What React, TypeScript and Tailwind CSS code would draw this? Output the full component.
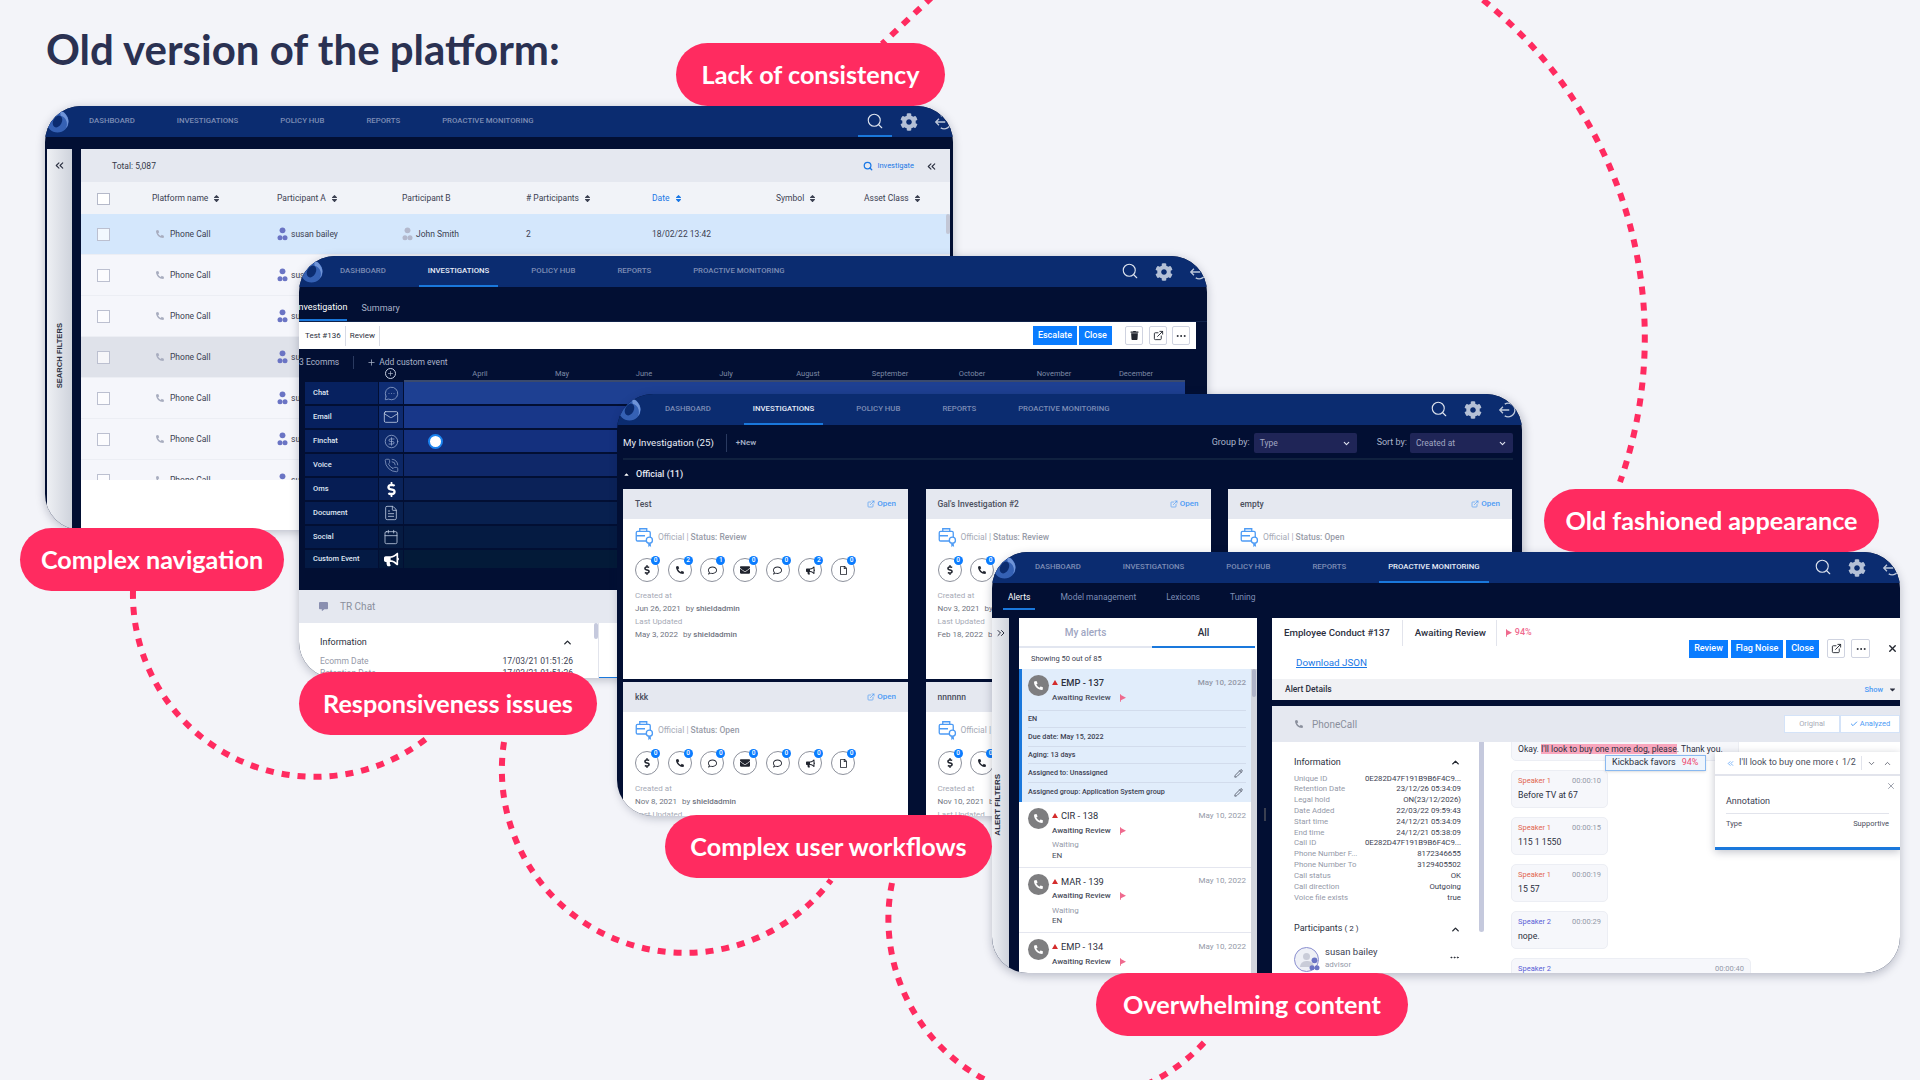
import React from 'react';
import { Search, ChevronsLeft, ChevronsRight, ChevronUp, ChevronDown, ExternalLink, MoreHorizontal, Pencil, X, FileText, MessageCircleMore, CircleDollarSign, Mail, PhoneCall, Calendar, Plus, Check } from 'lucide-react';
import { FaCog, FaPhoneAlt, FaSort, FaTrash, FaEnvelope, FaBullhorn, FaDollarSign, FaCommentAlt, FaRegFile, FaRegComment, FaCaretDown, FaCaretUp } from 'react-icons/fa';

const NAV = ['DASHBOARD', 'INVESTIGATIONS', 'POLICY HUB', 'REPORTS', 'PROACTIVE MONITORING'];

function Logo() {
  return (
    <svg viewBox="0 0 24 24" className="h-full w-full">
      <circle cx="12" cy="12" r="11.5" fill="#3561b4" />
      <path d="M12 .5A11.5 11.5 0 0 1 20 20 A9 9 0 0 0 15.500 6 A7 7 0 0 0 12 .5Z" fill="#6f94d8" />
      <ellipse cx="12" cy="12" rx="4.500" ry="6.500" transform="rotate(28 12 12)" fill="#0b2c70" />
    </svg>
  );
}

function ExitIcon() {
  return (
    <svg viewBox="0 0 20 20" className="h-[18px] w-[18px]" fill="none" stroke="#bcc7da" strokeWidth="1.500">
      <path d="M7.500 3.500A7.500 7.500 0 1 1 7.500 16.500" />
      <path d="M12.500 10H2M5.500 6.500 2 10l3.500 3.500" />
    </svg>
  );
}

function Header({ active, pl, shift, searchLine }: { active: number; pl: string; shift: string; searchLine?: boolean }) {
  return (
    <div className={`relative flex h-[31px] shrink-0 items-stretch bg-[#0b2c70] ${pl}`}>
      <div className="absolute left-[1px] top-[3px] h-[25px] w-[23px]">
        <Logo />
      </div>
      <div className="flex gap-[24px]">
        {NAV.map((n, i) => (
          <div
            key={n}
            className={`flex items-center border-b-2 px-[9px] text-[7.800px] font-medium whitespace-nowrap ${i === active ? 'border-[#1a78dc] text-[#e8edf7]' : 'border-transparent text-[#7d8db5]'}`}
          >
            {n}
          </div>
        ))}
      </div>
      <div className={`ml-auto flex items-center ${shift}`}>
        <div className={`flex h-full w-[34px] items-center justify-center border-b-2 ${searchLine ? 'border-[#1a78dc]' : 'border-transparent'}`}>
          <Search size={18} strokeWidth={1.500} className="text-[#dde3ee]" />
        </div>
        <div className="flex w-[34px] justify-center">
          <FaCog size={18} className="text-[#b4c0d6]" />
        </div>
        <div className="flex w-[34px] justify-center">
          <ExitIcon />
        </div>
      </div>
    </div>
  );
}

function UserIcon({ color = '#6a74c4' }: { color?: string }) {
  return (
    <svg viewBox="0 0 12 18" className="h-[15px] w-[11px] shrink-0">
      <circle cx="6" cy="4" r="3.500" fill={color} />
      <circle cx="3" cy="13" r="3" fill={color} />
      <circle cx="9" cy="13" r="3" fill={color} />
    </svg>
  );
}

function Window1() {
  const rows = ['bg-[#d4e7fc]', 'bg-[#f5f6fb]', 'bg-[#f5f6fb]', 'bg-[#dfe2ea]', 'bg-[#f5f6fb]', 'bg-[#f5f6fb]', 'bg-[#f5f6fb]'];
  const cols = 'grid grid-cols-[71px_125px_125px_124px_126px_124px_88px_1fr] items-center';
  const Head = ({ t, blue, noSort }: { t: string; blue?: boolean; noSort?: boolean }) => (
    <div className={`flex items-center gap-[4px] text-[8.500px] ${blue ? 'text-[#1a78e6]' : 'text-[#3c4152]'}`}>
      {t}
      {!noSort && <FaSort size={9} />}
    </div>
  );
  return (
    <div className="absolute left-[45px] top-[106px] flex h-[424px] w-[908px] flex-col overflow-hidden rounded-[36px] bg-[#020f33] shadow-[0_2px_10px_rgba(10,20,50,0.25)]">
      <Header active={-1} pl="pl-[35px]" shift="-mr-[7px]" searchLine />
      <div className="mt-[12px] flex min-h-0 flex-1 pl-[2px] pr-[3px]">
        <div className="flex w-[25px] shrink-0 flex-col items-center bg-gradient-to-r from-[#eef0f4] to-[#cfd3dc]">
          <ChevronsLeft size={13} className="mt-[10px] text-[#2a2f40]" />
          <div className="mt-[151px] rotate-180 font-['Liberation_Sans',sans-serif] text-[7.600px] font-bold text-[#2a2f40] [writing-mode:vertical-rl]">SEARCH FILTERS</div>
        </div>
        <div className="ml-[9px] flex min-w-0 flex-1 flex-col bg-white">
          <div className="flex h-[33px] shrink-0 items-center bg-[#e5e8f0] pl-[31px] pt-[1px] text-[8.500px] text-[#343848]">
            Total: 5,087
            <div className="ml-auto flex items-center pr-[12px]">
              <Search size={10} strokeWidth={3} className="text-[#1a78e6]" />
              <span className="ml-[4px] text-[7.500px] text-[#1a78e6]">Investigate</span>
              <ChevronsLeft size={13} className="ml-[11px] text-[#2a2f40]" />
            </div>
          </div>
          <div className={`${cols} h-[32px] shrink-0 bg-[#f1f3f8] pt-[1px]`}>
            <div className="ml-[16px] h-[12px] w-[13px] border border-[#b5b9c9] bg-white" />
            <Head t="Platform name" />
            <Head t="Participant A" />
            <Head t="Participant B" noSort />
            <Head t="# Participants" />
            <Head t="Date" blue />
            <Head t="Symbol" />
            <Head t="Asset Class" />
          </div>
          <div className="relative h-[266px] shrink-0 overflow-hidden">
            <div className="absolute right-0 top-[0px] h-[20px] w-[4px] rounded-full bg-[#c3c7d6]" />
            {rows.map((bg, i) => (
              <div key={i} className={`${cols} h-[41px] border-b border-[#eceef4] text-[8.500px] text-[#3c4152] ${bg}`}>
                <div className="ml-[16px] h-[13px] w-[13px] border border-[#bcc0d0] bg-white/70" />
                <div className="ml-[4px] flex items-center gap-[6px]">
                  <FaPhoneAlt size={8} className="text-[#a8adbf]" />
                  Phone Call
                </div>
                <div className="flex items-center gap-[3px]">
                  <UserIcon />
                  susan bailey
                </div>
                <div className="flex items-center gap-[3px]">
                  <UserIcon color="#b3b8cc" />
                  John Smith
                </div>
                <div>2</div>
                <div>18/02/22 13:42</div>
              </div>
            ))}
          </div>
        </div>
      </div>
    </div>
  );
}

const TIMELINE = [
  { t: 'Chat', lab: 'bg-[#07215f]', ic: 'bg-[#0f2d74]', bar: 'bg-[#1e4092]', el: <MessageCircleMore size={15} strokeWidth={1.200} className="text-[#9fb0d4]" /> },
  { t: 'Email', lab: 'bg-[#07205e]', ic: 'bg-[#0e2b70]', bar: 'bg-[#183789]', el: <Mail size={16} strokeWidth={1.200} className="text-[#c4cfe4]" /> },
  { t: 'Finchat', lab: 'bg-[#071f5b]', ic: 'bg-[#0d296b]', bar: 'bg-[#14307e]', el: <CircleDollarSign size={15} strokeWidth={1.200} className="text-[#9fb0d4]" /> },
  { t: 'Voice', lab: 'bg-[#061e58]', ic: 'bg-[#0c2766]', bar: 'bg-[#0f2869]', el: <PhoneCall size={15} strokeWidth={1.100} className="text-[#9fb0d4]" /> },
  { t: 'Oms', lab: 'bg-[#061d54]', ic: 'bg-[#0a235a]', bar: 'bg-[#0b2258]', el: <FaDollarSign size={15} className="text-white" /> },
  { t: 'Document', lab: 'bg-[#051c50]', ic: 'bg-[#08204f]', bar: 'bg-[#08204f]', el: <FileText size={16} strokeWidth={1.200} className="text-[#c4cfe4]" /> },
  { t: 'Social', lab: 'bg-[#041a4a]', ic: 'bg-[#061b42]', bar: 'bg-[#051b42]', el: <Calendar size={16} strokeWidth={1.200} className="text-[#c4cfe4]" /> },
  { t: 'Custom Event', lab: 'bg-[#041a44]', ic: 'bg-[#03183a]', bar: 'bg-[#031a38]', el: <FaBullhorn size={15} className="text-white" /> },
];
const MONTHS = ['April', 'May', 'June', 'July', 'August', 'September', 'October', 'November', 'December'];

function Window2() {
  return (
    <div className="absolute left-[299px] top-[256px] flex h-[422px] w-[908px] flex-col overflow-hidden rounded-[36px] bg-[#020f33] shadow-[0_2px_10px_rgba(10,20,50,0.25)]">
      <Header active={1} pl="pl-[32px]" shift="-mr-[8px]" />
      <div className="flex h-[35px] shrink-0 items-end gap-[14px] border-b border-[#10224a] text-[9px] text-[#aab4ca]">
        <div className="-ml-[3px] flex h-[25px] items-center border-b-2 border-[#1a78dc] text-white">Investigation</div>
        <div className="flex h-[25px] items-center">Summary</div>
      </div>
      <div className="flex h-[27px] w-[897px] shrink-0 items-center bg-white pl-[6px] text-[8px] text-[#2c3040]">
        <span className="border-r border-[#d8dbe5] pr-[4px] leading-[20px]">Test #136</span>
        <span className="border-r border-[#d8dbe5] px-[4px] leading-[20px]">Review</span>
        <div className="ml-auto flex items-center pr-[6px]">
          <span className="flex h-[19px] w-[44px] items-center justify-center bg-[#0a7cff] text-[9px] font-medium text-white">Escalate</span>
          <span className="ml-[2px] flex h-[19px] w-[33px] items-center justify-center bg-[#0a7cff] text-[9px] font-medium text-white">Close</span>
          <span className="ml-[13px] flex h-[19px] w-[18px] items-center justify-center rounded-[2px] border border-[#cfd3e0]"><FaTrash size={9} className="text-[#22262f]" /></span>
          <span className="ml-[6px] flex h-[19px] w-[18px] items-center justify-center rounded-[2px] border border-[#cfd3e0]"><ExternalLink size={11} className="text-[#22262f]" /></span>
          <span className="ml-[5px] flex h-[19px] w-[18px] items-center justify-center rounded-[2px] border border-[#cfd3e0]"><MoreHorizontal size={12} className="text-[#22262f]" /></span>
        </div>
      </div>
      <div className="flex h-[241px] shrink-0 flex-col pl-[6px]">
        <div className="flex h-[26px] shrink-0 items-center pt-[1px] text-[8.500px] text-[#aab4ca]">
          <span className="-ml-[6px] border-r border-[#2a3a60] pr-[14px]">3 Ecomms</span>
          <Plus size={9} className="ml-[13px] text-[#aab4ca]" />
          <span className="ml-[3px]">Add custom event</span>
        </div>
        <div className="relative flex h-[7px] shrink-0 items-end">
          <div className="absolute left-[80px] -top-[7px] flex h-[11px] w-[11px] items-center justify-center rounded-full border border-[#c8d0e2]"><Plus size={7} className="text-[#c8d0e2]" /></div>
          <div className="ml-[99px] flex h-[2px] w-[781px] bg-[#3a4a6d]" />
          <div className="absolute left-[99px] -top-[7px] flex w-[781px] pl-[35px]">
            {MONTHS.map((m) => (
              <div key={m} className="w-[82px] shrink-0 text-center text-[7.500px] text-[#7e8aa6]">{m}</div>
            ))}
          </div>
        </div>
        <div className="flex w-[880px] flex-col gap-[2px]">
          {TIMELINE.map((r) => (
            <div key={r.t} className={`relative grid grid-cols-[73px_24px_781px] gap-x-[1px] ${r.t === 'Custom Event' ? 'h-[18px] overflow-hidden' : 'h-[22px]'}`}>
              <div className={`flex items-center pl-[8px] text-[7.500px] font-medium text-[#dfe5f2] ${r.lab}`}>{r.t}</div>
              <div className={`flex items-center justify-center ${r.ic}`}>{r.el}</div>
              <div className={`relative ${r.bar}`}>
                {r.t === 'Finchat' && <div className="absolute left-[24px] top-[4px] h-[15px] w-[15px] rounded-full border-2 border-[#1a82ee] bg-white" />}
              </div>
            </div>
          ))}
        </div>
      </div>
      <div className="flex h-[33px] shrink-0 items-center bg-[#e5e8f0] pl-[20px] text-[10px] text-[#8a8f9c]">
        <FaCommentAlt size={9} className="text-[#8a8fb0]" />
        <span className="ml-[12px]">TR Chat</span>
      </div>
      <div className="relative flex flex-1 bg-white">
        <div className="flex w-[300px] shrink-0 flex-col border-r border-[#e2e4ec] pl-[21px] pr-[25px] pt-[13px] text-[8.500px]">
          <div className="flex items-center justify-between text-[9px] text-[#2c3040]">Information<ChevronUp size={11} strokeWidth={3} className="text-[#22262f]" /></div>
          <div className="mt-[5px] flex justify-between leading-[12px]"><span className="text-[#9499a8]">Ecomm Date</span><span className="text-[#3c4152]">17/03/21 01:51:26</span></div>
          <div className="flex justify-between leading-[12px]"><span className="text-[#9499a8]">Retention Date</span><span className="text-[#3c4152]">17/03/21 01:51:26</span></div>
        </div>
        <div className="absolute left-[295px] top-0 h-[16px] w-[4px] rounded-full bg-[#c5c9dd]" />
        <div className="mt-auto h-[2px] flex-1 bg-[#1a78dc]" />
      </div>
    </div>
  );
}

function CaseIcon() {
  return (
    <svg viewBox="0 0 22 24" className="h-[21px] w-[20px] shrink-0" fill="none" stroke="#4d9bf5" strokeWidth="1.500">
      <rect x="1" y="5" width="16" height="11" rx="1.500" />
      <path d="M5 5V2h8v3M1 10h10" />
      <circle cx="16" cy="15" r="3.500" fill="#fff" />
      <path d="M14.500 18.500 15 23l1.500-1.500 1.500 1.500-.5-4.500" fill="#4d9bf5" stroke="none" />
    </svg>
  );
}

const BADGE_ICONS = [
  <FaDollarSign size={10} className="text-[#20242e]" />,
  <FaPhoneAlt size={8} className="text-[#20242e]" />,
  <FaRegComment size={9} className="text-[#20242e]" />,
  <FaEnvelope size={10} className="text-[#20242e]" />,
  <FaRegComment size={9} className="text-[#20242e]" />,
  <FaBullhorn size={9} className="text-[#20242e]" />,
  <FaRegFile size={9} className="text-[#20242e]" />,
];

function Card({ title, status, counts, created, updated }: { title: string; status: string; counts: number[]; created: string; updated: string }) {
  return (
    <div className="flex h-[190px] flex-col bg-white">
      <div className="flex h-[30px] shrink-0 items-center justify-between bg-[#e5e8f0] px-[12px] text-[8.500px] font-medium text-[#4a4e5c]">
        {title}
        <span className="flex items-center gap-[2px] text-[8px] font-medium text-[#4d9bf5]"><ExternalLink size={8} />Open</span>
      </div>
      <div className="flex items-center gap-[3px] pl-[12px] pt-[8px] text-[8.500px] text-[#a6aab6]">
        <CaseIcon />
        <span>Official | <span className="font-medium text-[#989ca8]">{status}</span></span>
      </div>
      <div className="mt-[10px] flex gap-[8.700px] pl-[12px]">
        {counts.map((c, i) => (
          <div key={i} className="relative flex h-[24px] w-[24px] items-center justify-center rounded-full border border-[#8d919c] bg-white">
            {BADGE_ICONS[i]}
            <span className="absolute -right-[2px] -top-[3px] flex h-[9px] w-[9px] items-center justify-center rounded-full bg-[#0a7cff] text-[6.500px] font-medium text-white">{c}</span>
          </div>
        ))}
      </div>
      <div className="mt-[7px] pl-[12px] text-[8px] leading-[13px] text-[#a6aab6]">Created at</div>
      <div className="pl-[12px] text-[8px] leading-[13px] text-[#6f7380]">{created} <span className="ml-[3px]">by</span> <span className="font-medium">shieldadmin</span></div>
      <div className="pl-[12px] text-[8px] leading-[13px] text-[#a6aab6]">Last Updated</div>
      <div className="pl-[12px] text-[8px] leading-[13px] text-[#6f7380]">{updated} <span className="ml-[3px]">by</span> <span className="font-medium">shieldadmin</span></div>
    </div>
  );
}

function Select({ label, w }: { label: string; w: string }) {
  return (
    <div className={`flex h-[20px] items-center justify-between rounded-[2px] bg-[#1f2557] px-[6px] text-[8.500px] text-[#a0a6c2] ${w}`}>
      {label}
      <ChevronDown size={9} strokeWidth={3} className="text-[#e0e4f0]" />
    </div>
  );
}

function Window3() {
  return (
    <div className="absolute left-[617px] top-[394px] flex h-[422px] w-[905px] flex-col overflow-hidden rounded-[36px] bg-[#020f33] shadow-[2px_2px_10px_rgba(10,20,50,0.25)]">
      <Header active={1} pl="pl-[39px]" shift="-mr-[2px]" />
      <div className="mx-[6px] flex h-[35px] w-[890px] shrink-0 items-center border-b-2 border-[#10213f] pt-[3px]">
        <span className="text-[9.700px] text-[#e8ecf5]">My Investigation (25)</span>
        <span className="ml-[12px] h-[18px] border-l border-[#2a3a60]" />
        <span className="ml-[9px] text-[8px] font-medium text-[#aab4ca]">+New</span>
        <span className="ml-auto text-[9px] text-[#aab4ca]">Group by:</span>
        <span className="ml-[4px]"><Select label="Type" w="w-[103px]" /></span>
        <span className="ml-[20px] text-[9px] text-[#aab4ca]">Sort by:</span>
        <span className="ml-[3px]"><Select label="Created at" w="w-[103px]" /></span>
      </div>
      <div className="flex h-[29px] shrink-0 items-center pl-[6px] text-[9px] font-medium text-[#e8ecf5]">
        <FaCaretUp size={7} className="mr-[6px] text-white" />
        Official (11)
      </div>
      <div className="grid grid-cols-[285px_285px_284px] gap-x-[17.500px] gap-y-[3px] pl-[6px]">
        <Card title="Test" status="Status: Review" counts={[0, 2, 1, 0, 0, 2, 0]} created="Jun 26, 2021" updated="May 3, 2022" />
        <Card title="Gal's Investigation #2" status="Status: Review" counts={[0, 0, 0, 0, 0, 0, 0]} created="Nov 3, 2021" updated="Feb 18, 2022" />
        <Card title="empty" status="Status: Open" counts={[0, 0, 0, 0, 0, 0, 0]} created="Nov 3, 2021" updated="Feb 18, 2022" />
        <Card title="kkk" status="Status: Open" counts={[0, 0, 0, 0, 0, 0, 0]} created="Nov 8, 2021" updated="Nov 8, 2021" />
        <Card title="nnnnnn" status="Status: Open" counts={[0, 0, 0, 0, 0, 0, 0]} created="Nov 10, 2021" updated="Nov 10, 2021" />
      </div>
    </div>
  );
}

function Flag() {
  return (
    <svg viewBox="0 0 8 10" className="h-[8px] w-[6px]"><path d="M0 0h1.200v10H0zM1.200 1 8 4.500 1.200 8z" fill="#ef6a8e" /></svg>
  );
}

function AlertHead({ id, h }: { id: string; h: string }) {
  return (
    <div className={`flex items-start ${h}`}>
      <div className="mt-[6px] flex h-[21px] w-[21px] shrink-0 items-center justify-center rounded-full bg-[#7e7e80]">
        <FaPhoneAlt size={9} className="text-white" />
      </div>
      <div className="ml-[3px] flex min-w-0 flex-1 flex-col">
        <div className="mt-[7px] flex items-center justify-between">
          <span className="flex items-center text-[9.300px] text-[#2c3040]">
            <span className="mr-[3px] h-0 w-0 border-x-[3px] border-b-[5px] border-x-transparent border-b-[#d42c2c]" />
            {id}
          </span>
          <span className="text-[8px] text-[#9499a8]">May 10, 2022</span>
        </div>
        <div className="mt-[2px] flex items-center text-[8px] font-medium text-[#4a4e5c]">
          Awaiting Review
          <span className="ml-[9px]"><Flag /></span>
        </div>
      </div>
    </div>
  );
}

const INFO = [
  ['Unique ID', '0E282D47F191B9B6F4C9...'],
  ['Retention Date', '23/12/26 05:34:09'],
  ['Legal hold', 'ON(23/12/2026)'],
  ['Date Added', '22/03/22 09:59:43'],
  ['Start time', '24/12/21 05:34:09'],
  ['End time', '24/12/21 05:38:09'],
  ['Call ID', '0E282D47F191B9B6F4C9...'],
  ['Phone Number F...', '8172346655'],
  ['Phone Number To', '3129405502'],
  ['Call status', 'OK'],
  ['Call direction', 'Outgoing'],
  ['Voice file exists', 'true'],
];

function Bubble({ who, time, text, wide }: { who: string; time: string; text: string; wide?: boolean }) {
  const color = who === 'Speaker 1' ? 'text-[#e2664f]' : 'text-[#5a5fd6]';
  return (
    <div className={`h-[38px] shrink-0 rounded-[5px] border border-[#eceef4] bg-[#f6f7fb] px-[6px] pt-[4px] ${wide ? 'w-[240px]' : 'w-[97px]'}`}>
      <div className="flex justify-between text-[7.500px]"><span className={color}>{who}</span><span className="text-[#9499a8]">{time}</span></div>
      <div className="mt-[3px] text-[8.700px] text-[#2c3040]">{text}</div>
    </div>
  );
}

function Window4() {
  return (
    <div className="absolute left-[992px] top-[552px] flex h-[421px] w-[908px] flex-col overflow-hidden rounded-[36px] bg-[#020f33] shadow-[0_3px_10px_rgba(10,20,50,0.25)]">
      <Header active={4} pl="pl-[34px]" shift="-mr-[8px]" />
      <div className="flex h-[35px] shrink-0 items-stretch gap-[25px] pl-[11px] text-[8.500px] text-[#7d8db5]">
        <div className="mb-[8px] mt-[4px] flex items-center border-b-2 border-[#1a78dc] px-[5px] text-white">Alerts</div>
        <div className="mb-[8px] mt-[4px] flex items-center border-b-2 border-transparent">Model management</div>
        <div className="mb-[8px] ml-[5px] mt-[4px] flex items-center border-b-2 border-transparent">Lexicons</div>
        <div className="mb-[8px] ml-[5px] mt-[4px] flex items-center border-b-2 border-transparent">Tuning</div>
      </div>
      <div className="flex min-h-0 flex-1">
        <div className="flex w-[17px] shrink-0 flex-col bg-gradient-to-r from-[#eef0f4] to-[#cfd3dc]">
          <ChevronsRight size={12} className="ml-[3px] mt-[9px] text-[#2a2f40]" />
          <div className="mt-[135px] rotate-180 self-start font-['Liberation_Sans',sans-serif] text-[8px] font-bold text-[#2a2f40] [writing-mode:vertical-rl]">ALERT FILTERS</div>
        </div>
        <div className="ml-[10px] flex w-[238px] shrink-0 flex-col overflow-hidden bg-white">
          <div className="flex h-[30px] shrink-0 text-[10px] font-medium">
            <div className="flex w-[133px] items-center justify-center border-b-2 border-[#e2e6f0] text-[#a0a6c2]">My alerts</div>
            <div className="flex w-[103px] items-center justify-center border-b-2 border-[#1a78dc] text-[#2c3040]">All</div>
          </div>
          <div className="flex h-[21px] shrink-0 items-center pl-[12px] text-[7.500px] text-[#3c4152]">Showing 50 out of 85</div>
          <div className="relative flex min-h-0 flex-1 flex-col">
            <div className="absolute bottom-0 right-0 top-0 w-[6px] bg-[#d3d6de]">
              <div className="ml-[1px] h-[28px] w-[4px] rounded-full bg-[#b0b4c8]" />
            </div>
            <div className="h-[133px] w-[232px] shrink-0 border-l-[3px] border-[#1a78dc] bg-[#e1edfb] pl-[6px] pr-[5px] text-[7.200px] font-medium text-[#3c4152]">
              <AlertHead id="EMP - 137" h="h-[41px]" />
              <div className="flex h-[17px] items-center border-t border-[#d2dcec]">EN</div>
              <div className="flex h-[19px] items-center border-t border-[#d2dcec]">Due date: May 15, 2022</div>
              <div className="flex h-[17px] items-center border-t border-[#d2dcec]">Aging: 13 days</div>
              <div className="flex h-[19px] items-center justify-between border-t border-[#d2dcec] pr-[3px]">Assigned to: Unassigned<Pencil size={9} className="text-[#3c4152]" /></div>
              <div className="flex h-[20px] items-center justify-between border-t border-[#d2dcec] pr-[3px]">Assigned group: Application System group<Pencil size={9} className="text-[#3c4152]" /></div>
            </div>
            {['CIR - 138', 'MAR - 139', 'EMP - 134'].map((id) => (
              <div key={id} className="h-[65.500px] w-[232px] shrink-0 border-b border-[#e4e6ef] pl-[9px] pr-[5px]">
                <AlertHead id={id} h="h-[38px]" />
                <div className="ml-[24px] text-[8px] leading-[10.500px] text-[#9499a8]">Waiting</div>
                <div className="ml-[24px] text-[8px] leading-[10.500px] text-[#4a4e5c]">EN</div>
              </div>
            ))}
          </div>
        </div>
        <div className="flex w-[15px] shrink-0 items-center justify-center">
          <div className="mt-[38px] h-[13px] w-[2px] bg-[#3a3f50]" />
        </div>
        <div className="flex min-w-0 flex-1 flex-col">
          <div className="relative h-[61px] shrink-0 bg-white">
            <div className="flex h-[30px] items-center text-[9.700px] font-medium text-[#2c3040]">
              <span className="border-r border-[#e2e4ec] pl-[12px] pr-[12px] leading-[26px]">Employee Conduct #137</span>
              <span className="border-r border-[#e2e4ec] pl-[12px] pr-[10px] leading-[26px]">Awaiting Review</span>
              <span className="ml-[9px] flex items-center gap-[3px] text-[9px] text-[#ef6a8e]"><Flag />94%</span>
            </div>
            <div className="ml-[24px] mt-[8px] text-[9.800px] text-[#1a78e6] underline">Download JSON</div>
            <div className="absolute right-0 top-[21px] flex items-center">
              <span className="flex h-[18px] w-[39px] items-center justify-center bg-[#0a7cff] text-[9px] font-medium text-white">Review</span>
              <span className="ml-[3px] flex h-[18px] w-[52px] items-center justify-center bg-[#0a7cff] text-[9px] font-medium text-white">Flag Noise</span>
              <span className="ml-[3px] flex h-[18px] w-[33px] items-center justify-center bg-[#0a7cff] text-[9px] font-medium text-white">Close</span>
              <span className="ml-[8px] flex h-[19px] w-[18px] items-center justify-center rounded-[2px] border border-[#cfd3e0]"><ExternalLink size={11} className="text-[#22262f]" /></span>
              <span className="ml-[6px] flex h-[19px] w-[19px] items-center justify-center rounded-[2px] border border-[#cfd3e0]"><MoreHorizontal size={12} className="text-[#22262f]" /></span>
              <span className="ml-[14px] flex w-[16px] justify-center"><X size={11} strokeWidth={3} className="text-[#22262f]" /></span>
            </div>
          </div>
          <div className="flex h-[21px] shrink-0 items-center justify-between bg-[#f0f1f4] pl-[13px] pr-[3px] text-[8.500px] font-medium text-[#2c3040]">
            Alert Details
            <span className="flex items-center gap-[5px] text-[7.500px] text-[#4d9bf5]">Show<FaCaretDown size={9} className="text-[#2c3040]" /></span>
          </div>
          <div className="mt-[6px] flex h-[36px] shrink-0 items-center justify-between bg-[#e5e8f0] pl-[23px] text-[10px] text-[#8a8f9c]">
            <span className="flex items-center gap-[9px]"><FaPhoneAlt size={8} className="text-[#8a8f9c]" />PhoneCall</span>
            <span className="flex h-[18px] text-[7.500px]">
              <span className="flex w-[56px] items-center justify-center border border-[#d4e3f8] bg-white text-[#a6aab6]">Original</span>
              <span className="flex w-[60px] items-center justify-center gap-[2px] border border-[#d4e3f8] bg-white text-[#4d9bf5]"><Check size={8} strokeWidth={3} />Analyzed</span>
            </span>
          </div>
          <div className="relative flex min-h-0 flex-1 overflow-hidden bg-white">
            <div className="w-[207px] shrink-0 pl-[22px] pr-[18px] pt-[14px]">
              <div className="flex items-center justify-between text-[9px] text-[#2c3040]">Information<ChevronUp size={11} strokeWidth={3} className="text-[#22262f]" /></div>
              <div className="mt-[4px]">
                {INFO.map(([k, v]) => (
                  <div key={k} className="flex justify-between text-[7.800px] leading-[10.830px]">
                    <span className="text-[#9499a8]">{k}</span>
                    <span className="text-[#3c4152]">{v}</span>
                  </div>
                ))}
              </div>
              <div className="mt-[19px] flex items-center justify-between text-[9px] text-[#2c3040]">
                <span>Participants <span className="text-[8px]">( 2 )</span></span>
                <ChevronUp size={11} strokeWidth={3} className="text-[#22262f]" />
              </div>
              <div className="mt-[11px] flex items-start">
                <div className="relative h-[25px] w-[25px] shrink-0 rounded-full border border-[#8a8fd0] bg-[#eef0f6]">
                  <div className="mx-auto mt-[5px] h-[7px] w-[7px] rounded-full bg-[#c9ccd8]" />
                  <div className="mx-auto mt-[1px] h-[6px] w-[14px] rounded-t-full bg-[#c9ccd8]" />
                  <span className="absolute -bottom-[1px] -right-[2px]"><UserIcon /></span>
                </div>
                <div className="-mt-[2px] ml-[6px] text-[9.500px] leading-[13px] text-[#3c4152]">susan bailey<div className="text-[8px] text-[#9499a8]">advisor</div></div>
                <MoreHorizontal size={11} className="ml-auto mr-[1px] mt-[5px] text-[#22262f]" />
              </div>
            </div>
            <div className="h-[190px] w-[5px] shrink-0 rounded-b-full bg-[#c5c9dd]" />
            <div className="ml-[27px] flex flex-col gap-[9px]">
              <div className="-mt-[15px] h-[34px] w-[228px] shrink-0 whitespace-nowrap rounded-[5px] border border-[#eceef4] bg-[#f6f7fb] px-[6px] pt-[15px] text-[8.600px] text-[#2c3040]">
                Okay. <span className="bg-[#f9a6bd]">I'll look to buy one more dog, please</span>. Thank you.
              </div>
              <Bubble who="Speaker 1" time="00:00:10" text="Before TV at 67" />
              <Bubble who="Speaker 1" time="00:00:15" text="115 1 1550" />
              <Bubble who="Speaker 1" time="00:00:19" text="15 57" />
              <Bubble who="Speaker 2" time="00:00:29" text="nope." />
              <Bubble who="Speaker 2" time="00:00:40" text="" wide />
            </div>
            <div className="absolute left-[333px] top-[13px] flex h-[16px] w-[101px] items-center gap-[6px] border border-[#8ab9f0] bg-[#eef5fd] pl-[6px] text-[9px] text-[#2c3040] shadow-sm">
              Kickback favors<span className="text-[#ef4a6e]">94%</span>
            </div>
            <div className="absolute right-0 top-[10px] w-[185px] bg-white shadow-[0_2px_8px_rgba(10,20,50,0.25)]">
              <div className="flex h-[24px] items-center border-b-2 border-[#e2e4ec] pl-[11px] text-[9px] text-[#4a4e5c]">
                <ChevronsLeft size={9} className="text-[#4d9bf5]" />
                <span className="ml-[4px] w-[99px] shrink-0 overflow-hidden whitespace-nowrap">I'll look to buy one more dog</span>
                <span className="ml-[4px] border-r border-[#e2e4ec] pr-[5px]">1/2</span>
                <ChevronDown size={9} className="ml-[5px]" />
                <ChevronUp size={9} className="ml-[7px]" />
              </div>
              <div className="relative h-[74px] border-b-[3px] border-[#1a78dc] px-[11px] pt-[19px]">
                <X size={10} className="absolute right-[4px] top-[5px] text-[#8a8f9c]" />
                <div className="border-b border-[#e2e4ec] pb-[4px] text-[9px] text-[#3c4152]">Annotation</div>
                <div className="mt-[4px] flex justify-between text-[7.500px] text-[#4a4e5c]"><span>Type</span><span>Supportive</span></div>
              </div>
            </div>
          </div>
        </div>
      </div>
    </div>
  );
}

function Pill({ text, pos }: { text: string; pos: string }) {
  return (
    <div className={`absolute flex h-[63px] items-center justify-center rounded-full bg-[#ff2b60] text-[25.200px] font-bold text-white font-['Lato',sans-serif] ${pos}`}>
      {text}
    </div>
  );
}

export default function App() {
  return (
    <div className="relative h-[1080px] w-[1920px] overflow-hidden bg-[#f3f4f9] font-['Roboto',sans-serif]">
      <svg className="absolute left-0 top-0" width="1920" height="1080" fill="none" stroke="#ff2b60" strokeWidth="6" strokeDasharray="8 8">
        <path d="M932 -3 L882 44" />
        <path d="M1483 0 A433 433 0 0 1 1620 482" />
        <path d="M133 591 A182 182 0 0 0 431 735" />
        <path d="M504 742 A183 183 0 0 0 831 880" />
        <path d="M892 883 A182 182 0 0 0 1209 1037" />
      </svg>
      <h1 className="absolute left-[46px] top-[22px] text-[42px] font-bold leading-[54px] text-[#2a3152] font-['Lato',sans-serif]">Old version of the platform:</h1>
      <Window1 />
      <Window2 />
      <Window3 />
      <Window4 />
      <Pill text="Lack of consistency" pos="left-[676px] top-[43px] w-[269px]" />
      <Pill text="Complex navigation" pos="left-[20px] top-[528px] w-[264px]" />
      <Pill text="Responsiveness issues" pos="left-[299px] top-[672px] w-[298px]" />
      <Pill text="Complex user workflows" pos="left-[665px] top-[815px] w-[327px]" />
      <Pill text="Overwhelming content" pos="left-[1096px] top-[973px] w-[312px]" />
      <Pill text="Old fashioned appearance" pos="left-[1544px] top-[489px] w-[335px]" />
    </div>
  );
}
